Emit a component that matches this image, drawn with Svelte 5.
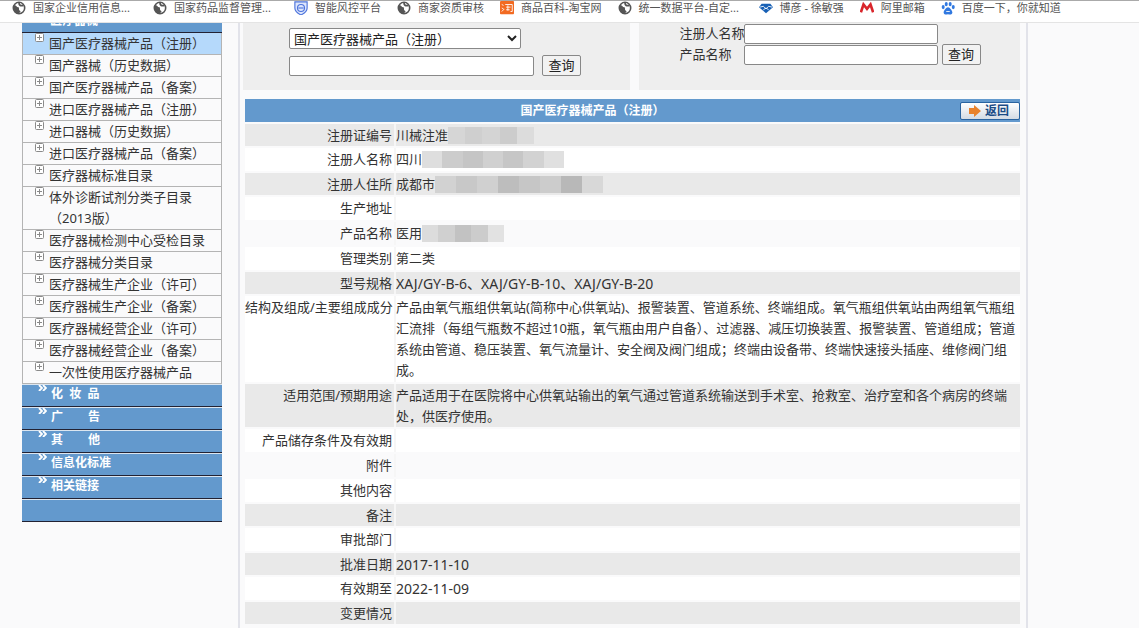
<script lang="ts">
  interface Bookmark {
    icon: string
    label: string
  }

  interface Mask {
    width: number
    tones: string[]
  }

  interface Row {
    label: string
    value?: string
    tone: 'gray' | 'white' | 'faint'
    code?: boolean // model numbers and dates, set a size larger
    mask?: Mask
  }

  const bookmarks: Bookmark[] = [
    { icon: 'globe', label: '国家企业信用信息...' },
    { icon: 'globe', label: '国家药品监督管理...' },
    { icon: 'shield', label: '智能风控平台' },
    { icon: 'globe', label: '商家资质审核' },
    { icon: 'tao', label: '商品百科-淘宝网' },
    { icon: 'globe', label: '统一数据平台-自定...' },
    { icon: 'diamond', label: '博彦 - 徐敏强' },
    { icon: 'mail', label: '阿里邮箱' },
    { icon: 'paw', label: '百度一下，你就知道' },
  ]

  const devices = [
    '国产医疗器械产品（注册）',
    '国产器械（历史数据）',
    '国产医疗器械产品（备案）',
    '进口医疗器械产品（注册）',
    '进口器械（历史数据）',
    '进口医疗器械产品（备案）',
    '医疗器械标准目录',
    '体外诊断试剂分类子目录（2013版）',
    '医疗器械检测中心受检目录',
    '医疗器械分类目录',
    '医疗器械生产企业（许可）',
    '医疗器械生产企业（备案）',
    '医疗器械经营企业（许可）',
    '医疗器械经营企业（备案）',
    '一次性使用医疗器械产品',
  ]

  const sections = ['化  妆  品', '广        告', '其        他', '信息化标准', '相关链接', '']

  const rows: Row[] = [
    { label: '注册证编号', value: '川械注准', tone: 'gray', mask: { width: 86, tones: ['#d6d6d6', '#cfcfcf', '#d4d4d4', '#cccccc', '#dcdcdc'] } },
    { label: '注册人名称', value: '四川', tone: 'white', mask: { width: 142, tones: ['#dedede', '#cccccc', '#c5c5c5', '#d0d0d0', '#c6c6c6', '#d2d2d2', '#e0e0e0'] } },
    { label: '注册人住所', value: '成都市', tone: 'gray', mask: { width: 168, tones: ['#d2d2d2', '#c8c8c8', '#d0d0d0', '#bdbdbd', '#c6c6c6', '#cccccc', '#b8b8b8', '#d8d8d8'] } },
    { label: '生产地址', tone: 'white' },
    { label: '产品名称', value: '医用', tone: 'faint', mask: { width: 82, tones: ['#dcdcdc', '#d0d0d0', '#c2c2c2', '#cccccc', '#e2e2e2'] } },
    { label: '管理类别', value: '第二类', tone: 'white' },
    { label: '型号规格', value: 'XAJ/GY-B-6、XAJ/GY-B-10、XAJ/GY-B-20', tone: 'gray', code: true },
    {
      label: '结构及组成/主要组成成分',
      value: '产品由氧气瓶组供氧站(简称中心供氧站)、报警装置、管道系统、终端组成。氧气瓶组供氧站由两组氧气瓶组汇流排（每组气瓶数不超过10瓶，氧气瓶由用户自备）、过滤器、减压切换装置、报警装置、管道组成；管道系统由管道、稳压装置、氧气流量计、安全阀及阀门组成；终端由设备带、终端快速接头插座、维修阀门组成。',
      tone: 'white',
    },
    {
      label: '适用范围/预期用途',
      value: '产品适用于在医院将中心供氧站输出的氧气通过管道系统输送到手术室、抢救室、治疗室和各个病房的终端处，供医疗使用。',
      tone: 'gray',
    },
    { label: '产品储存条件及有效期', tone: 'white' },
    { label: '附件', tone: 'faint' },
    { label: '其他内容', tone: 'white' },
    { label: '备注', tone: 'gray' },
    { label: '审批部门', tone: 'white' },
    { label: '批准日期', value: '2017-11-10', tone: 'gray', code: true },
    { label: '有效期至', value: '2022-11-09', tone: 'white', code: true },
    { label: '变更情况', tone: 'gray' },
  ]

  let category = $state(devices[0])
  let keyword = $state('')
  let registrant = $state('')
  let productName = $state('')
</script>

{#snippet bookmarkIcon(name: string)}
  <svg viewBox="0 0 16 16" width="14" height="14" aria-hidden="true">
    {#if name === 'globe'}
      <circle cx="8" cy="8" r="6.5" fill="#fff" stroke="#555" stroke-width="1.8" />
      <path d="M2 5c3-1 3 2 5 2s0 3 2 4-1 3-2 3C3 14 1 10 2 5z" fill="#555" />
      <path d="M8 2c0 3 2 4 5 3" fill="none" stroke="#555" stroke-width="2" />
    {:else if name === 'shield'}
      <path d="M1 1h14v7c0 4-3 6-7 8-4-2-7-4-7-8z" fill="#dde6fc" stroke="#4d74dc" stroke-width="1.3" />
      <circle cx="8" cy="8" r="4" fill="none" stroke="#4d74dc" stroke-width="1.3" />
      <path d="M5 8h6" stroke="#4d74dc" stroke-width="1.3" />
    {:else if name === 'tao'}
      <rect width="16" height="15" rx="1" fill="#f26a21" />
      <path d="M2 4l2 1M2 8l2 1M2 12l3-3M6 4h8v8h-2M7 7h5M7 10h4M9 5v6" stroke="#fff" fill="none" />
    {:else if name === 'diamond'}
      <path d="M3 3h10l3 4-8 7-8-7z" fill="#1760b5" />
      <path d="M1 7l4-1 3 3 3-3 4 1M5 10l3-2 3 2" stroke="#fff" fill="none" />
    {:else if name === 'mail'}
      <path d="M1 13L4 4l4 5 4-5 3 9" stroke="#d9252b" stroke-width="3" fill="none" />
    {:else}
      <path d="M8 7c2 0 5 4 5 6s-2 3-5 2c-3 1-5 0-5-2s3-6 5-6z" fill="#3179e0" />
      <ellipse cx="2.5" cy="7" rx="1.7" ry="2.3" fill="#3179e0" />
      <ellipse cx="6" cy="3.5" rx="1.7" ry="2.5" fill="#3179e0" />
      <ellipse cx="10.5" cy="3.5" rx="1.7" ry="2.5" fill="#3179e0" />
      <ellipse cx="14" cy="7" rx="1.7" ry="2.3" fill="#3179e0" />
      <path d="M6 12h4" stroke="#fff" />
    {/if}
  </svg>
{/snippet}

<div class="page">
  <nav class="bookmarks">
    {#each bookmarks as bookmark}
      <a href="#top">
        {@render bookmarkIcon(bookmark.icon)}
        <span class:long={bookmark.label.endsWith('...')}>{bookmark.label}</span>
      </a>
    {/each}
  </nav>

  <div class="body">
    <aside>
      <div class="section head"><span>医疗器械</span></div>
      <ul>
        {#each devices as device}
          <li class:active={device === category}>
            <svg viewBox="0 0 9 9" width="9" height="9" aria-hidden="true">
              <rect x="0.5" y="0.5" width="8" height="8" rx="1" fill="#fff" stroke="#8a8a8a" />
              <path d="M2 4.5h5M4.5 2v5" stroke="#8a8a8a" />
            </svg>
            <a href="#device">{device}</a>
          </li>
        {/each}
      </ul>
      {#each sections as section}
        <div class="section">
          {#if section}
            <svg viewBox="0 0 9 6" width="9" height="6" aria-hidden="true">
              <path d="M1 0l3 3-3 3M5 0l3 3-3 3" fill="none" stroke="#fff" stroke-width="1.8" />
            </svg>
            <a href="#section">{section}</a>
          {/if}
        </div>
      {/each}
    </aside>

    <main>
      <div class="search">
        <form class="quick" onsubmit={(e) => e.preventDefault()}>
          <select aria-label="分类" bind:value={category}>
            {#each devices as device}
              <option>{device}</option>
            {/each}
          </select>
          <div class="line">
            <input type="text" aria-label="关键字" bind:value={keyword} />
            <button>查询</button>
          </div>
        </form>
        <form class="advanced" onsubmit={(e) => e.preventDefault()}>
          <div class="line">
            <label for="registrant">注册人名称</label>
            <input id="registrant" type="text" bind:value={registrant} />
          </div>
          <div class="line">
            <label for="product">产品名称</label>
            <input id="product" type="text" bind:value={productName} />
            <button>查询</button>
          </div>
        </form>
      </div>

      <div class="title">
        <h1>国产医疗器械产品（注册）</h1>
        <button class="back">
          <svg viewBox="0 0 12 12" width="12" height="12" aria-hidden="true">
            <path d="M0 3h5V0l7 6-7 6V9H0z" fill="#e8822c" />
          </svg>
          返回
        </button>
      </div>

      <table>
        <tbody>
          {#each rows as row}
            <tr class={row.tone}>
              <th scope="row">{row.label}</th>
              <td class:code={row.code}>
                {#if row.mask}
                  <div class="masked">
                    <span>{row.value}</span>
                    <span class="mask" style:width="{row.mask.width}px">
                      {#each row.mask.tones as tone}
                        <i style:background={tone}></i>
                      {/each}
                    </span>
                  </div>
                {:else}
                  {row.value ?? ''}
                {/if}
              </td>
            </tr>
          {/each}
        </tbody>
      </table>
    </main>
  </div>
</div>

<style>
  :global(body) {
    margin: 0;
    background: #fafafb;
  }

  .page {
    height: 100vh;
    overflow: hidden;
    display: flex;
    flex-direction: column;
    font-family: 'Noto Sans', 'Noto Sans CJK SC', sans-serif;
    font-size: 13px;
    line-height: 21px;
    color: #333;
  }

  a {
    color: inherit;
    text-decoration: none;
  }

  .bookmarks {
    flex: none;
    display: flex;
    align-items: flex-start;
    gap: 16px;
    height: 23px;
    box-sizing: border-box;
    padding: 0 12px;
    background: #fff;
    border-top: 1px solid #aaa;
    border-bottom: 1px solid #e4e4e4;
    font-size: 11px;
    line-height: 12px;
    white-space: nowrap;
    color: #555;
  }

  .bookmarks a {
    display: flex;
    align-items: center;
    gap: 7px;
  }

  .long {
    min-width: 104px;
  }

  .body {
    flex: 1;
    min-height: 0;
    display: flex;
    align-items: stretch;
    padding-left: 22px;
  }

  aside {
    flex: none;
    width: 200px;
    margin-right: 16px;
  }

  ul {
    list-style: none;
    margin: 0;
    padding: 0;
  }

  li {
    display: flex;
    align-items: flex-start;
    gap: 5px;
    min-height: 21px;
    padding: 0 14px 0 12px;
    background: #fafafb;
    border: 1px solid #b4b4b4;
    border-top: 0;
  }

  li svg {
    flex: none;
  }

  li.active {
    background: #b5d9fb;
  }

  .section {
    display: flex;
    align-items: flex-start;
    gap: 4px;
    height: 23px;
    box-sizing: border-box;
    padding-left: 16px;
    background: #6399cd;
    border-top: 1px solid #dce6f0;
    border-bottom: 1px solid #223;
    color: #fff;
    font-size: 12px;
    font-weight: 700;
    line-height: 18px;
    white-space: pre;
  }

  .section.head {
    height: 10px;
    align-items: flex-end;
    padding-left: 28px;
    border-top: 0;
    line-height: 12px;
    overflow: hidden;
  }

  .head span {
    margin-bottom: 5px;
  }

  main {
    flex: 1;
    max-width: 775px;
    padding: 0 6px 0 5px;
    border: solid #e2e3ea;
    border-width: 0 2px;
  }

  .search {
    display: flex;
    gap: 9px;
    height: 67px;
    margin: 0 0 9px -2px;
  }

  form {
    flex: 1;
    background: #eee;
    display: flex;
    flex-direction: column;
    box-sizing: border-box;
  }

  .quick {
    padding: 5px 0 0 46px;
    gap: 6px;
  }

  .advanced {
    padding-left: 41px;
  }

  .line {
    display: flex;
    align-items: center;
    gap: 8px;
  }

  .advanced .line {
    gap: 0;
  }

  .advanced label {
    flex: none;
    width: 64px;
    white-space: nowrap;
  }

  .advanced button {
    margin-left: 4px;
  }

  input, select, button {
    box-sizing: border-box;
    font: inherit;
    color: #222;
    border: 1px solid #888;
    border-radius: 2px;
  }

  input {
    width: 245px;
    height: 20px;
    padding: 0 4px;
    background: #fff;
  }

  .advanced input {
    width: 194px;
  }

  select {
    width: 232px;
    height: 21px;
    padding: 0;
    background: #fff;
    line-height: 19px;
  }

  .line button {
    width: 39px;
    height: 21px;
    padding: 0;
    background: #f2f2f2;
    line-height: 19px;
  }

  .title {
    display: flex;
    align-items: center;
    height: 23px;
    background: #6399cd;
  }

  h1 {
    flex: 1;
    margin: 0;
    padding-right: 20px;
    text-align: center;
    font-size: 12px;
    color: #fff;
  }

  .back {
    display: flex;
    align-items: center;
    gap: 4px;
    width: 60px;
    height: 18px;
    padding: 0 0 0 8px;
    border-color: #2a64a0;
    background: linear-gradient(#fff, #d3dbe4);
    color: #1b4c86;
    font-size: 12px;
    font-weight: 700;
    line-height: 16px;
  }

  table {
    width: 100%;
    border-spacing: 0 2px;
    table-layout: fixed;
  }

  th, td {
    height: 23px;
    box-sizing: border-box;
    padding: 1px 0;
    vertical-align: top;
    text-align: left;
    line-height: 21px;
  }

  th {
    width: 151px;
    padding-right: 2px;
    border-right: 2px solid #f6f6f6;
    text-align: right;
    font-weight: 400;
    white-space: nowrap;
  }

  .code {
    font-size: 14px;
  }

  .gray > * {
    height: 22px;
    padding-bottom: 0;
    background: #e9e9e9;
  }

  .white > * {
    background: #fff;
  }

  .masked {
    display: flex;
    align-items: center;
  }

  .mask {
    display: flex;
    height: 17px;
  }

  .mask i {
    flex: 1;
  }
</style>
